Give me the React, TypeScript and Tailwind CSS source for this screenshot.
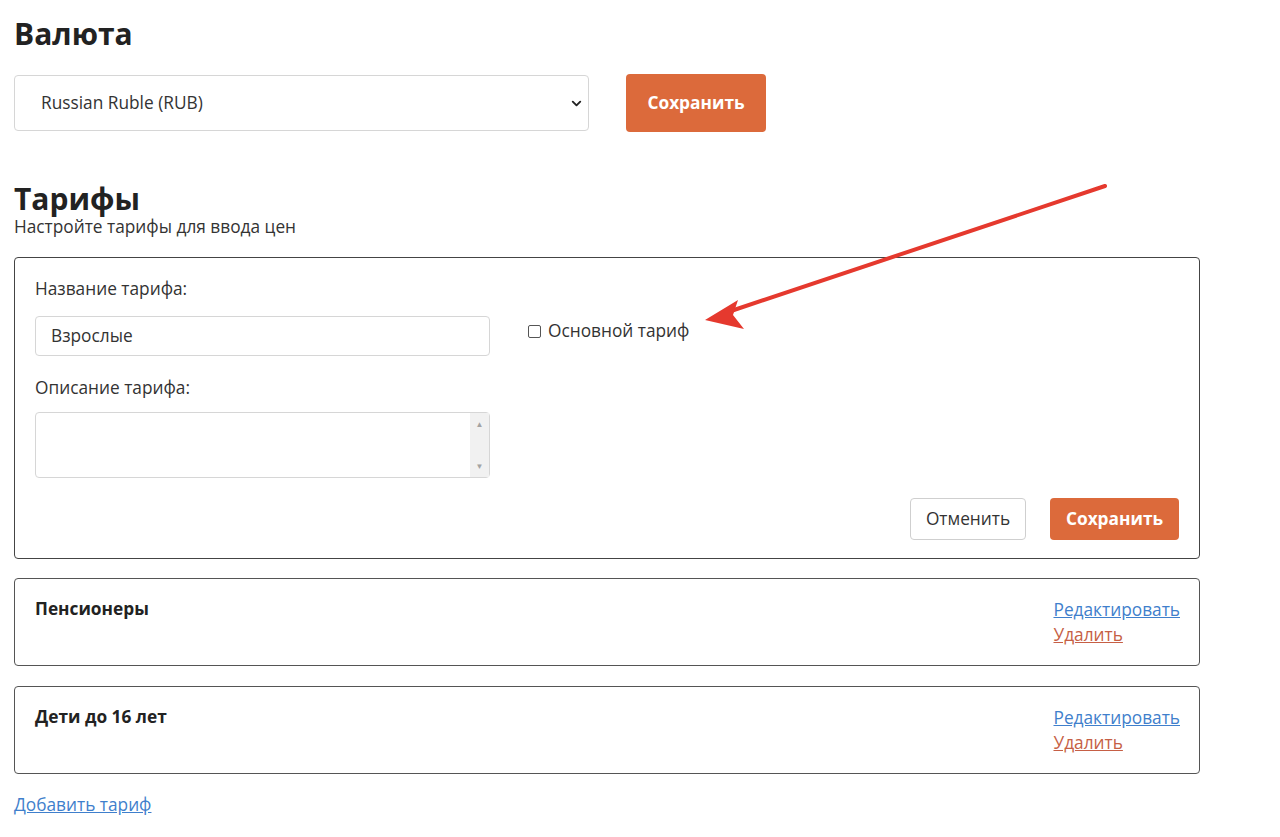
import { FiChevronDown } from "react-icons/fi";

const tariffs = [
  { name: "Пенсионеры" },
  { name: "Дети до 16 лет" },
];

const TariffRow = ({ name }: { name: string }) => (
  <div className="flex justify-between rounded border border-[#555] pl-5 pr-[19px] pt-[18px] h-[88px]">
    <div className="font-bold text-[17.3px] leading-6 text-[#222]">{name}</div>
    <div className="flex flex-col text-[17.3px] leading-[25px]">
      <a href="#" className="text-[#3f7fcc] underline">Редактировать</a>
      <a href="#" className="text-[#c65f45] underline">Удалить</a>
    </div>
  </div>
);

export default function App() {
  return (
    <div className="relative min-h-screen bg-white pl-[14px] pr-[80px] text-[#333]" style={{ fontFamily: '"Open Sans", "Noto Sans", sans-serif' }}>
      {/* Currency */}
      <h1 className="pt-[14px] text-[30px] font-bold leading-10 text-[#222]">Валюта</h1>
      <div className="mt-[20px] flex items-center gap-[37px]">
        <div className="flex h-[56px] w-[575px] items-center justify-between rounded border border-[#d6d6d6] pl-[26px] pr-[4px]">
          <span className="text-[17.3px] text-[#333]">Russian Ruble (RUB)</span>
          <FiChevronDown className="text-[15px] text-[#222]" strokeWidth={3} />
        </div>
        <button className="h-[58px] w-[140px] rounded bg-[#dc6a3b] text-[17.3px] font-bold text-white">Сохранить</button>
      </div>

      {/* Tariffs */}
      <h2 className="mt-[49px] text-[30px] font-bold leading-9 text-[#222]">Тарифы</h2>
      <p className="text-[17.3px] leading-5 text-[#333]">Настройте тарифы для ввода цен</p>

      <div className="mt-[20px] w-[1186px] rounded border border-[#444] px-5 pt-[19px] pb-[18px]">
        <div className="flex">
          <div className="w-[455px]">
            <label className="block text-[17.3px] leading-6">Название тарифа:</label>
            <div className="mt-[15px] flex h-[40px] items-center rounded border border-[#d6d6d6] px-[15px] text-[17.3px]">Взрослые</div>
            <label className="mt-[20px] block text-[17.3px] leading-6">Описание тарифа:</label>
            <div className="mt-[12px] flex h-[66px] rounded border border-[#d6d6d6]">
              <div className="flex-1" />
              <div className="flex w-[19px] flex-col items-center justify-between bg-[#f1f1f1] py-[7px] text-[8px] leading-none text-[#a3a3a3]">
                <span>▲</span>
                <span>▼</span>
              </div>
            </div>
          </div>
          <label className="ml-[38px] mt-[42px] flex h-[24px] items-center gap-[7px] text-[17.3px]">
            <span className="h-[13px] w-[13px] rounded-[2px] border border-[#555] bg-white" />
            Основной тариф
          </label>
        </div>
        <div className="mt-[20px] flex justify-end gap-6">
          <button className="h-[42px] w-[116px] rounded border border-[#cfcfcf] bg-white text-[17.3px] text-[#333]">Отменить</button>
          <button className="h-[42px] w-[129px] rounded bg-[#dc6a3b] text-[17.3px] font-bold text-white">Сохранить</button>
        </div>
      </div>

      <div className="mt-[19px] flex w-[1186px] flex-col gap-[20px]">
        {tariffs.map((t) => (
          <TariffRow key={t.name} name={t.name} />
        ))}
      </div>

      <a href="#" className="mt-[19px] inline-block text-[17.3px] leading-6 text-[#3f7fcc] underline">Добавить тариф</a>

      {/* Annotation arrow */}
      <svg className="pointer-events-none absolute left-0 top-0" width="1280" height="837">
        <line x1="1105" y1="186" x2="728" y2="312" stroke="#e5392e" strokeWidth="4" strokeLinecap="round" />
        <polygon points="705,320 738,300 733,315 744,329" fill="#e5392e" />
      </svg>
    </div>
  );
}
